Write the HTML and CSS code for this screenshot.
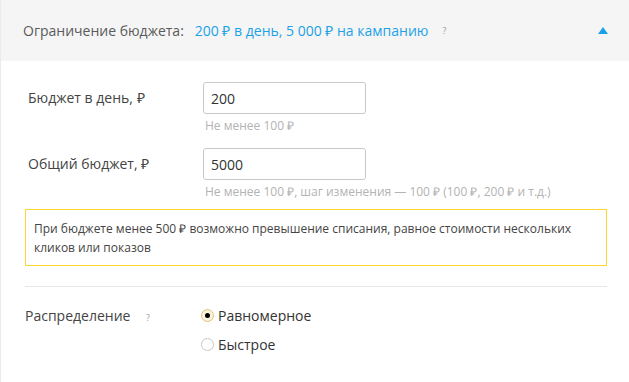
FILE: index.html
```html
<!DOCTYPE html>
<html lang="ru">
<head>
    <meta charset="UTF-8">
    <meta name="viewport" content="width=device-width, initial-scale=1.0">
    <title>Ограничение бюджета</title>
    <link rel="stylesheet" href="styles.css">
</head>
<body>
    <div class="budget">
        <div class="budget-head">
            <span class="head-title">Ограничение бюджета:</span>
            <span class="head-value">200 ₽ в день, 5 000 ₽ на кампанию</span>
            <span class="hint-mark">?</span>
            <span class="toggle"></span>
        </div>
        <div class="budget-body">
            <div class="field">
                <label class="field-label">Бюджет в день, ₽</label>
                <div class="field-control">
                    <input class="text-input" type="text" value="200">
                    <div class="field-hint">Не менее 100 ₽</div>
                </div>
            </div>
            <div class="field field-second">
                <label class="field-label">Общий бюджет, ₽</label>
                <div class="field-control">
                    <input class="text-input" type="text" value="5000">
                    <div class="field-hint">Не менее 100 ₽, шаг изменения — 100 ₽ (100 ₽, 200 ₽ и т.д.)</div>
                </div>
            </div>
            <div class="notice">При бюджете менее 500 ₽ возможно превышение списания, равное стоимости нескольких кликов или показов</div>
            <hr class="divider">
            <div class="distribution">
                <div class="dist-label">Распределение <span class="hint-mark">?</span></div>
                <div class="radios">
                    <label class="radio"><span class="radio-box checked"></span>Равномерное</label>
                    <label class="radio"><span class="radio-box"></span>Быстрое</label>
                </div>
            </div>
        </div>
    </div>
</body>
</html>
```

FILE: styles.css
```css
body { margin: 0; font-family: "Open Sans", Arial, sans-serif; color: #333; background: #fff; }
.budget { width: 629px; height: 382px; border-left: 1px solid #ebebeb; box-sizing: border-box; }
.budget-head { height: 61px; background: #f5f5f5; display: flex; align-items: center; padding-left: 22px; font-size: 14px; }
.head-title { color: #5a5a5a; }
.head-value { color: #1ba2e6; margin-left: 11px; }
.hint-mark { font-size: 9px; color: #999; margin-left: 14px; }
.toggle { margin-left: auto; margin-right: 21px; width: 0; height: 0; border-left: 5.5px solid transparent; border-right: 5.5px solid transparent; border-bottom: 7px solid #1ba2e6; }
.budget-body { padding: 21px 22px 0 24px; }
.field { display: flex; }
.field-second { margin-top: 14px; }
.field-label { width: 175px; padding-left: 3px; font-size: 14px; color: #444; line-height: 32px; }
.text-input { display: block; width: 163px; height: 32px; box-sizing: border-box; border: 1px solid #c9c9c9; border-radius: 3px; padding: 0 7px; font-family: inherit; font-size: 14px; color: #333; }
.field-hint { margin-top: 4px; padding-left: 2px; font-size: 12px; line-height: 16px; color: #b3b3b3; }
.notice { margin-top: 9px; border: 1px solid #fed732; padding: 9px 8px 8px; font-size: 12px; line-height: 19px; color: #444; }
.divider { margin: 20px 0 0; border: 0; border-top: 1px solid #e6e6e6; }
.distribution { display: flex; margin-top: 14px; }
.dist-label { width: 176px; font-size: 14px; color: #444; line-height: 29px; }
.dist-label .hint-mark { margin-left: 12px; }
.radios { display: flex; flex-direction: column; }
.radio { display: flex; align-items: center; font-size: 14px; color: #333; line-height: 29px; }
.radio-box { width: 13px; height: 13px; box-sizing: border-box; border: 1px solid #c8c8c8; border-radius: 50%; margin-right: 4px; position: relative; }
.radio-box.checked { border-color: #e3c47d; background: #fbf2db; }
.radio-box.checked::after { content: ""; position: absolute; left: 3px; top: 3px; width: 5px; height: 5px; border-radius: 50%; background: #000; }
```
